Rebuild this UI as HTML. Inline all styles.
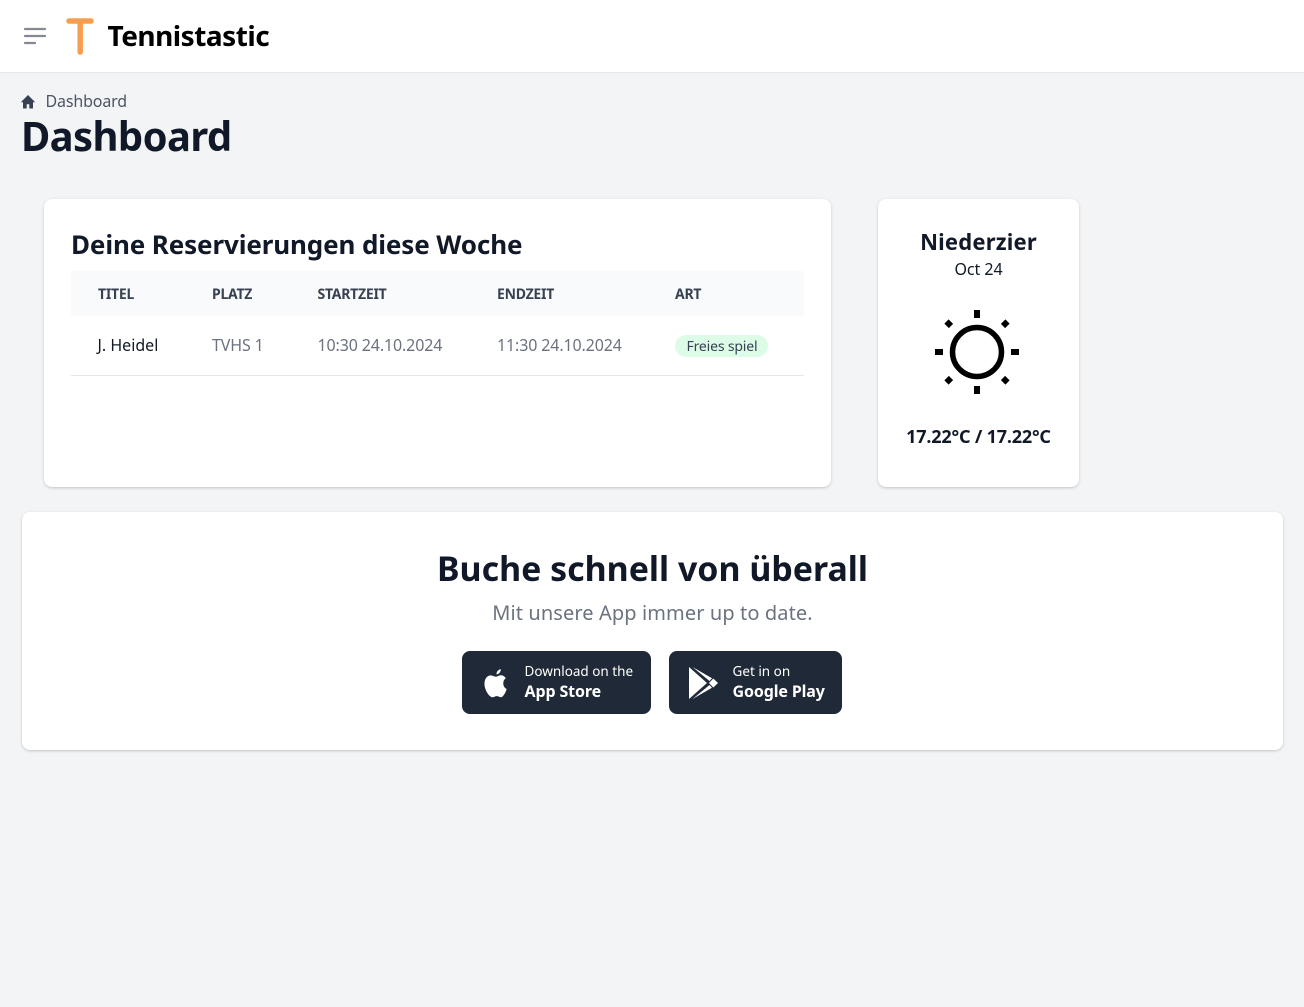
<!DOCTYPE html>
<html lang="de"><head><meta charset="utf-8"><title>Dashboard</title>
<style>
html,body{margin:0;padding:0;width:1304px;height:1007px;overflow:hidden;background:#f3f4f6;font-family:"Noto Sans","Liberation Sans","Noto Sans CJK SC",sans-serif;color:#111827}
.a{position:absolute;white-space:nowrap;line-height:1}
.card{position:absolute;background:#fff;border-radius:8px;box-shadow:0 1px 3px rgba(0,0,0,.16),0 1px 2px -1px rgba(0,0,0,.1)}
.th{font-size:14px;font-weight:700;color:#374151;top:288px;letter-spacing:-.25px}
.td{font-size:16px;color:#6b7280;top:337px;letter-spacing:-.13px}
svg{position:absolute;display:block}
</style></head><body>
<div style="position:absolute;left:0;top:0;width:1304px;height:72px;background:#fff;border-bottom:1px solid #e5e7eb"></div>
<svg style="left:22px;top:26px" width="26" height="20" viewBox="0 0 26 20"><path d="M3 3h20M3 10h20M3 17h10" stroke="#858994" stroke-width="2.200" fill="none" stroke-linecap="round"/></svg>
<svg style="left:64px;top:15px" width="32" height="41" viewBox="0 0 32 41"><path d="M5 6h22M16.200 6v31" stroke="#f59e4f" stroke-width="5.500" fill="none" stroke-linecap="round"/></svg>
<div class="a" style="left:107.500px;top:21px;font-size:28px;font-weight:700;color:#000;line-height:30px;letter-spacing:-.5px">Tennistastic</div>
<svg style="left:19.500px;top:94px" width="16" height="16" viewBox="0 0 16 16"><path d="M8 1L.8 8.200h2.200v6.300h3.700v-4.200h2.600v4.200H13V8.200h2.200z" fill="#374151"/></svg>
<div class="a" style="left:45.500px;top:91px;font-size:16px;color:#4b5563;line-height:20px;letter-spacing:-.15px">Dashboard</div>
<div class="a" style="left:21px;top:111px;font-size:40px;font-weight:700;color:#111827;line-height:50px;letter-spacing:-.6px">Dashboard</div>

<div class="card" style="left:44px;top:199px;width:787px;height:288px"></div>
<div class="a" style="left:71px;top:227px;font-size:26px;font-weight:700;color:#111827;line-height:34px;letter-spacing:-.12px">Deine Reservierungen diese Woche</div>
<div style="position:absolute;left:71px;top:271px;width:733px;height:45px;background:#f9fafb"></div>
<div class="a th" style="left:98px">TITEL</div>
<div class="a th" style="left:212px">PLATZ</div>
<div class="a th" style="left:317.500px">STARTZEIT</div>
<div class="a th" style="left:497px">ENDZEIT</div>
<div class="a th" style="left:675px">ART</div>
<div class="a td" style="left:97.500px;color:#111827;letter-spacing:0">J. Heidel</div>
<div class="a td" style="left:212px">TVHS 1</div>
<div class="a td" style="left:317.500px">10:30 24.10.2024</div>
<div class="a td" style="left:497px">11:30 24.10.2024</div>
<div style="position:absolute;left:675px;top:335px;width:93px;height:22px;border-radius:11px;background:#dcfce7"></div>
<div class="a" style="left:686.500px;top:340px;font-size:14px;color:#374151;letter-spacing:-.17px">Freies spiel</div>
<div style="position:absolute;left:71px;top:375px;width:733px;height:1px;background:#e5e7eb"></div>

<div class="card" style="left:878px;top:199px;width:201px;height:288px"></div>
<div class="a" style="left:878px;width:201px;text-align:center;top:228px;font-size:22px;font-weight:700;color:#111827;line-height:28px;letter-spacing:.2px">Niederzier</div>
<div class="a" style="left:878px;width:201px;text-align:center;top:259px;font-size:16px;color:#111827;line-height:20px;letter-spacing:-.05px">Oct 24</div>
<svg style="left:929px;top:304px" width="96" height="96" viewBox="0 0 96 96"><circle cx="48" cy="48" r="24.500" fill="none" stroke="#000" stroke-width="5.500"/><path d="M48 6v8M48 82v8M6 48h8M82 48h8M17.500 17.500l4.500 4.500M74 74l4.500 4.500M17.500 78.500L22 74M74 22l4.500-4.500" stroke="#000" stroke-width="6" fill="none"/></svg>
<div class="a" style="left:878px;width:201px;text-align:center;top:426px;font-size:18px;font-weight:700;color:#111827;line-height:22px;letter-spacing:-.18px">17.22°C / 17.22°C</div>

<div class="card" style="left:22px;top:512px;width:1261px;height:238px"></div>
<div class="a" style="left:22px;width:1261px;text-align:center;top:545px;font-size:33.900px;font-weight:700;color:#111827;line-height:46px">Buche schnell von überall</div>
<div class="a" style="left:22px;width:1261px;text-align:center;top:599px;font-size:20px;color:#6b7280;line-height:28px;letter-spacing:.1px">Mit unsere App immer up to date.</div>

<div style="position:absolute;left:462px;top:651px;width:189px;height:63px;border-radius:8px;background:#1f2937"></div>
<svg style="left:483px;top:668px" width="26" height="30" viewBox="0 0 26 30"><g transform="scale(1,1.170)"><path d="M17.800 1c.2 2-1.800 4.500-4.300 4.500C13.300 3.300 15.500 1.300 17.800 1zM13 7.500c1.200 0 2.800-1.300 5-1.300 1.800 0 3.700 1 4.800 2.600-3.700 2.200-3.200 7.600.9 9.200-1 2.700-3.400 7-5.700 7-1.500 0-2.400-1-4.200-1-1.900 0-2.700 1-4.200 1C6.600 25 2 19.700 1.500 14.300 1.100 9.600 4 6.400 7.500 6.300c2.300 0 4 1.200 5.500 1.200z" fill="#fff"/></g></svg>
<div class="a" style="left:524.500px;top:662px;font-size:13.500px;color:#fff;line-height:18px">Download on the</div>
<div class="a" style="left:524.500px;top:681px;font-size:16px;font-weight:700;color:#fff;line-height:21px;letter-spacing:-.12px">App Store</div>

<div style="position:absolute;left:669px;top:651px;width:173px;height:63px;border-radius:8px;background:#1f2937"></div>
<svg style="left:687.500px;top:666px" width="32" height="34" viewBox="0 0 32 34"><path d="M1 1V33L19 17z" fill="#fff"/><path d="M4.500 1L21.500 15 24 12.300zM4.500 33L21.500 19 24 21.700z" fill="#fff"/><path d="M25.300 12.500L30 17 25.300 21.500 21 17z" fill="#fff"/></svg>
<div class="a" style="left:732.500px;top:662px;font-size:13.500px;color:#fff;line-height:18px">Get in on</div>
<div class="a" style="left:732.500px;top:681px;font-size:16px;font-weight:700;color:#fff;line-height:21px;letter-spacing:-.12px">Google Play</div>
</body></html>
